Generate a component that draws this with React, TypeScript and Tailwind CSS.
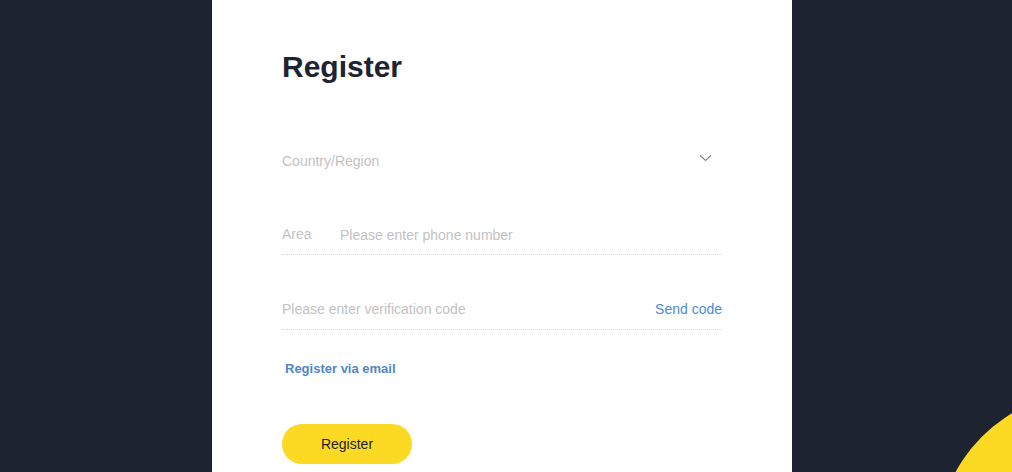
import React from "react";

export default function App() {
  return (
    <div
      className="relative h-[472px] w-[1012px] overflow-hidden bg-[#1e2331]"
      style={{ fontFamily: '"Liberation Sans", Arial, sans-serif' }}
    >
      <div className="absolute left-[937px] top-[392px] h-[306px] w-[306px] rounded-full bg-[#fcd923]" />
      <div className="ml-[212px] flex h-full w-[580px] flex-col bg-white px-[70px] pt-[49px]">
        <h1 className="h-[36px] text-[30px] font-bold leading-[36px] text-[#1e2331]">Register</h1>

        <div className="mt-[66px] flex h-5 items-center justify-between pr-[10px]">
          <span className="text-[14px] leading-5 text-[#c2c2c2]">Country/Region</span>
          <svg width="13" height="8" viewBox="0 0 13 8" fill="none" className="mb-[6px]">
            <path d="M1 1.2 L6.5 6.5 L12 1.2" stroke="#8a8a8a" strokeWidth="1.2" />
          </svg>
        </div>

        <div className="mt-[53px] flex items-start border-b border-dotted border-[#d6d6d6] pb-[9px]">
          <span className="w-[58px] text-[14px] leading-5 text-[#c2c2c2]">Area</span>
          <span className="mt-[1px] text-[14px] leading-5 text-[#c2c2c2]">Please enter phone number</span>
        </div>

        <div className="mt-[44px] flex items-center justify-between border-b border-dotted border-[#d6d6d6] pb-[10px]">
          <span className="text-[14px] leading-5 text-[#c2c2c2]">Please enter verification code</span>
          <span className="text-[14px] leading-5 text-[#4d8cd3]">Send code</span>
        </div>

        <div className="ml-[3px] mt-[29px] text-[13px] font-bold leading-5 text-[#4f86c8]">Register via email</div>

        <button className="mt-[45px] h-10 w-[130px] rounded-full bg-[#fcd923] text-[14px] text-[#1e2331]">
          Register
        </button>
      </div>
    </div>
  );
}
